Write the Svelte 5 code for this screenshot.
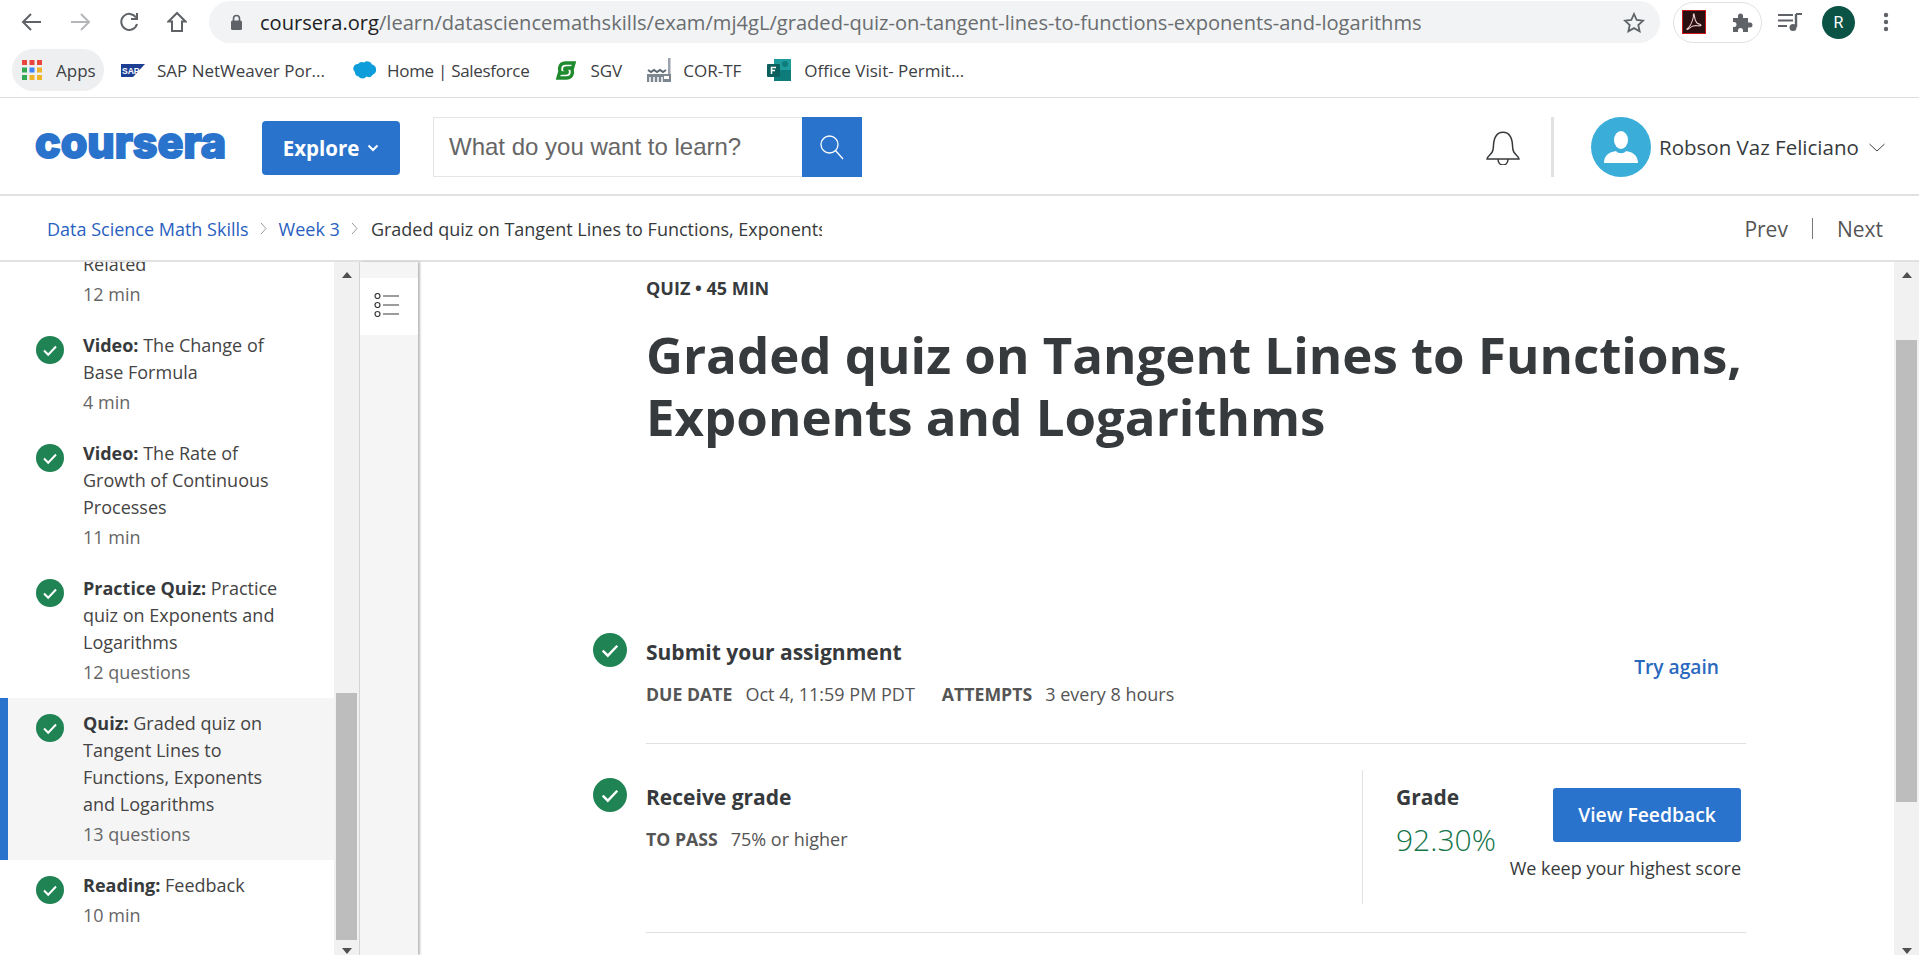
<script>
	const lessons = [
		{ label: 'Video:', title: 'The Change of Base Formula', meta: '4 min' },
		{ label: 'Video:', title: 'The Rate of Growth of Continuous Processes', meta: '11 min' },
		{ label: 'Practice Quiz:', title: 'Practice quiz on Exponents and Logarithms', meta: '12 questions' },
		{ label: 'Quiz:', title: 'Graded quiz on Tangent Lines to Functions, Exponents and Logarithms', meta: '13 questions', active: true },
		{ label: 'Reading:', title: 'Feedback', meta: '10 min' }
	];
</script>

{#snippet check(size)}
	<svg class="check" width={size} height={size} viewBox="0 0 28 28">
		<circle cx="14" cy="14" r="14" fill="#1f8354" />
		<path d="M8 14.5l4.2 4.2L20 10.5" fill="none" stroke="#fff" stroke-width="2" />
	</svg>
{/snippet}

<div class="page">
	<div class="toolbar">
		<svg class="nav first" width="21" height="20" viewBox="0 0 21 20"><path d="M20 10H3M10 2l-8 8 8 8" fill="none" stroke="#5f6368" stroke-width="2" /></svg>
		<svg class="nav" width="21" height="20" viewBox="0 0 21 20"><path d="M1 10h17M11 2l8 8-8 8" fill="none" stroke="#b4b6b9" stroke-width="2" /></svg>
		<svg class="nav" width="20" height="22" viewBox="0 0 20 22"><path d="M17 6.5A8 8 0 1 0 18 13M18 2v6h-6" fill="none" stroke="#5f6368" stroke-width="2" /></svg>
		<svg class="nav" width="20" height="22" viewBox="0 0 20 22"><path d="M10 2L1.5 10.5H5V20h10v-9.500h3.500z" fill="none" stroke="#5f6368" stroke-width="2" /></svg>
		<div class="omnibox">
			<svg width="13" height="17" viewBox="0 0 13 17"><path d="M3.500 7V4.500a3 3 0 0 1 6 0V7" fill="none" stroke="#5f6368" stroke-width="1.600" /><rect x="1" y="6.500" width="11" height="9.500" rx="1.500" fill="#5f6368" /></svg>
			<span class="url"><span class="host">coursera.org</span>/learn/datasciencemathskills/exam/mj4gL/graded-quiz-on-tangent-lines-to-functions-exponents-and-logarithms</span>
			<svg class="star" width="22" height="21" viewBox="0 0 22 21"><path d="M11 2l2.700 6 6.300.7-4.700 4.300 1.300 6.300L11 16.100 5.400 19.300 6.700 13 2 8.700 8.300 8z" fill="none" stroke="#5f6368" stroke-width="1.800" /></svg>
		</div>
		<div class="ext-pill">
			<svg width="24" height="24" viewBox="0 0 24 24"><rect x=".5" y=".5" width="23" height="23" fill="#2a0f10" stroke="#c8171d" /><path d="M5 19c3-2 5-6 6.500-12.500C11 4.500 11.500 3.500 12 4c.7.800 0 6 3 9 2 1.500 4 1 4 2.500-1 1-5-.500-8 .5-3 1-5 4-6 3.500z" fill="none" stroke="#e8c9c9" stroke-width="1.100" /></svg>
			<svg width="21" height="21" viewBox="0 0 21 21"><path d="M1 6h5V4a2.500 2.500 0 0 1 5 0v2h5v4.500h2a2.500 2.500 0 0 1 0 5h-2V20h-5v-1.500a2.500 2.500 0 0 0-5 0V20H1v-5h1a2.500 2.500 0 0 0 0-5H1z" fill="#5f6368" /></svg>
		</div>
		<svg class="media" width="24" height="20" viewBox="0 0 24 20"><path d="M0 3h15M0 8.500h15M0 14h9" stroke="#5f6368" stroke-width="2" /><path d="M18 2v13" stroke="#5f6368" stroke-width="2.400" /><path d="M18 2h6" stroke="#5f6368" stroke-width="2" /><circle cx="15" cy="15.500" r="3.500" fill="#5f6368" /></svg>
		<div class="profile">R</div>
		<svg class="dots" width="6" height="20" viewBox="0 0 6 20"><circle cx="3" cy="3" r="2.200" fill="#5f6368" /><circle cx="3" cy="10" r="2.200" fill="#5f6368" /><circle cx="3" cy="17" r="2.200" fill="#5f6368" /></svg>
	</div>

	<div class="bookmarks">
		<div class="bm apps">
			<svg width="20" height="20" viewBox="0 0 20 20">
				<g fill="#e8453c"><rect width="5" height="5" /><rect x="7.500" width="5" height="5" /><rect x="15" width="5" height="5" /></g>
				<rect y="7.500" width="5" height="5" fill="#34a853" />
				<rect x="7.500" y="7.500" width="5" height="5" fill="#4285f4" />
				<rect x="15" y="7.500" width="5" height="5" fill="#f0b429" />
				<rect y="15" width="5" height="5" fill="#34a853" />
				<rect x="7.500" y="15" width="5" height="5" fill="#f0b429" />
				<rect x="15" y="15" width="5" height="5" fill="#f0b429" />
			</svg>
			<span>Apps</span>
		</div>
		<div class="bm sap">
			<svg width="24" height="13" viewBox="0 0 24 13"><path d="M0 0h24L12 13H0z" fill="#1c3f94" /><text x="1" y="10" class="sap-mark">SAP</text></svg>
			<span>SAP NetWeaver Por...</span>
		</div>
		<div class="bm sf">
			<svg width="24" height="18" viewBox="0 0 24 18"><path d="M6 3a5 5 0 0 1 6-1.500A5 5 0 0 1 20 3.500a5.500 5.500 0 0 1 .5 10.500 4.500 4.500 0 0 1-6 1.500 5 5 0 0 1-8 0A4 4 0 0 1 3 11 4.500 4.500 0 0 1 6 3z" fill="#0d9ddb" /></svg>
			<span>Home | Salesforce</span>
		</div>
		<div class="bm sgv">
			<svg width="20" height="21" viewBox="0 0 20 21"><g fill="none" stroke="#1f8a2e" stroke-width="3.400"><path d="M6.500 13.500C2 12 2.500 3 9.500 3H18l-1.500 5H10.500C8 8 8.500 10.500 10 11" /><path d="M13.500 7.500C18 9 17.500 18 10.500 18H2l1.500-5h6c2.500 0 2-2.500.500-3" /></g></svg>
			<span>SGV</span>
		</div>
		<div class="bm cor">
			<svg width="24" height="24" viewBox="0 0 24 24"><path d="M21 0h2.500v17H21z" fill="#9aa3ab" /><path d="M1 12l3 2 3-2 3 2 3-2 3 2 3-2" fill="none" stroke="#5d6770" stroke-width="2" /><rect y="16" width="24" height="8" fill="#7d8790" /><path d="M3 19v5M7 19v5M11 19v5M15 19v5" stroke="#fff" stroke-width="1.500" /><rect x="17" y="18" width="5" height="3" fill="#fff" /></svg>
			<span>COR-TF</span>
		</div>
		<div class="bm office">
			<svg width="24" height="22" viewBox="0 0 24 22"><rect x="7" width="17" height="11" fill="#1e9c9b" /><circle cx="18" cy="5" r="3" fill="#0d7c7b" /><rect x="7" y="11" width="17" height="11" fill="#0d7c7b" /><rect y="5" width="13" height="13" rx="1" fill="#0b5f5e" /><path d="M4.500 15V8.500h4.500M4.500 11.500H8" fill="none" stroke="#fff" stroke-width="1.500" /></svg>
			<span>Office Visit- Permit...</span>
		</div>
	</div>

	<header class="site-header">
		<svg class="logo" width="191" height="34" viewBox="0 0 191 34"><text x="0" y="30" textLength="191" lengthAdjust="spacingAndGlyphs" class="logo-text">coursera</text></svg>
		<button class="explore">Explore
			<svg width="12" height="8" viewBox="0 0 12 8"><path d="M1.500 1.500L6 6l4.500-4.500" fill="none" stroke="#fff" stroke-width="2" /></svg>
		</button>
		<div class="search">
			<div class="search-input">What do you want to learn?</div>
			<div class="search-btn">
				<svg width="26" height="26" viewBox="0 0 26 26"><circle cx="10.500" cy="10.500" r="8.500" fill="none" stroke="#fff" stroke-width="1.300" /><path d="M16.500 16.500L24 25" stroke="#fff" stroke-width="1.300" /></svg>
			</div>
		</div>
		<svg class="bell" width="34" height="35" viewBox="0 0 34 35"><path d="M1 29c0-3 5-4 6-9 1-6 0-10 3-14 3-5 11-5 14 0 3 4 2 8 3 14 1 5 6 6 6 9zM12 29c0 8 10 8 10 0" fill="none" stroke="#373a3c" stroke-width="1.500" /></svg>
		<div class="sep"></div>
		<div class="avatar">
			<svg width="36" height="36" viewBox="0 0 36 36"><ellipse cx="18" cy="11" rx="7" ry="9" fill="#fff" /><path d="M1 34c0-9 7-11 12-12 2 3 8 3 10 0 5 1 12 3 12 12z" fill="#fff" /></svg>
		</div>
		<span class="user">Robson Vaz Feliciano</span>
		<svg width="16" height="9" viewBox="0 0 16 9"><path d="M.5 1L8 8l7.500-7" fill="none" stroke="#444" stroke-width="1" /></svg>
	</header>

	<nav class="crumbs">
		<a href="#a">Data Science Math Skills</a>
		<svg width="7" height="13" viewBox="0 0 7 13"><path d="M1 1l5 5.500L1 12" fill="none" stroke="#999" stroke-width="1" /></svg>
		<a href="#b">Week 3</a>
		<svg width="7" height="13" viewBox="0 0 7 13"><path d="M1 1l5 5.500L1 12" fill="none" stroke="#999" stroke-width="1" /></svg>
		<span class="current">Graded quiz on Tangent Lines to Functions, Exponents and Logarithms</span>
		<div class="pager">
			<span>Prev</span>
			<i></i>
			<span>Next</span>
		</div>
	</nav>

	<div class="workspace">
		<aside class="lessons">
			<div class="item clipped">
				<div class="text">
					<div>Related</div>
					<div class="meta">12 min</div>
				</div>
			</div>
			{#each lessons as l}
				<div class="item" class:active={l.active}>
					{@render check(28)}
					<div class="text">
						<div><b>{l.label}</b> {l.title}</div>
						<div class="meta">{l.meta}</div>
					</div>
				</div>
			{/each}
		</aside>
		<div class="scrollbar side">
			<span class="up"></span>
			<span class="thumb"></span>
			<span class="down"></span>
		</div>
		<div class="rail">
			<div class="rail-btn">
				<svg width="26" height="24" viewBox="0 0 26 24"><g fill="none" stroke="#373a3c" stroke-width="1.200"><circle cx="3.500" cy="3" r="2.500" /><circle cx="3.500" cy="12" r="2.500" /><circle cx="3.500" cy="21" r="2.500" /><path d="M9 3h16M9 12h16M9 21h16" /></g></svg>
			</div>
		</div>
		<main class="content">
			<div class="kicker">QUIZ • 45 MIN</div>
			<h1>Graded quiz on Tangent Lines to Functions, Exponents and Logarithms</h1>

			<section class="step">
				{@render check(34)}
				<div class="step-body">
					<div class="step-left">
						<h2>Submit your assignment</h2>
						<p><b>DUE DATE</b><span>Oct 4, 11:59 PM PDT</span><b class="second">ATTEMPTS</b><span>3 every 8 hours</span></p>
					</div>
					<a class="retry" href="#c">Try again</a>
				</div>
			</section>

			<section class="step">
				{@render check(34)}
				<div class="step-body">
					<div class="step-left">
						<h2>Receive grade</h2>
						<p><b>TO PASS</b><span>75% or higher</span></p>
					</div>
					<div class="grade">
						<div class="score">
							<h2>Grade</h2>
							<div class="pct">92.30%</div>
						</div>
						<div class="feedback">
							<button>View Feedback</button>
							<div class="keep">We keep your highest score</div>
						</div>
					</div>
				</div>
			</section>
		</main>
		<div class="scrollbar wide">
			<span class="up"></span>
			<span class="thumb"></span>
			<span class="down"></span>
		</div>
	</div>
</div>

<style>
	:global(body) {
		margin: 0;
		background: #fff;
	}
	.page {
		width: 1919px;
		height: 955px;
		display: flex;
		flex-direction: column;
		overflow: hidden;
		font-family: "Open Sans", sans-serif;
		color: #373a3c;
	}

	/* browser chrome */
	.toolbar {
		height: 44px;
		flex: none;
		display: flex;
		align-items: center;
	}
	.nav {
		flex: none;
		margin-left: 28px;
	}
	.nav.first {
		margin-left: 21px;
	}
	.omnibox {
		margin-left: 22px;
		width: 1451px;
		height: 42px;
		box-sizing: border-box;
		background: #f1f3f4;
		border-radius: 21px;
		display: flex;
		align-items: center;
		padding-left: 21px;
	}
	.url {
		margin-left: 17px;
		font-size: 20.100px;
		color: #6a6d70;
		white-space: nowrap;
		flex: 1;
	}
	.host {
		color: #202124;
	}
	.star {
		margin-right: 15px;
	}
	.ext-pill {
		margin-left: 13px;
		width: 89px;
		height: 41px;
		box-sizing: border-box;
		border: 1.500px solid #dfe1e5;
		border-radius: 21px;
		display: flex;
		align-items: center;
		gap: 26px;
		padding-left: 8px;
	}
	.media {
		margin-left: 16px;
	}
	.profile {
		margin-left: 20px;
		width: 33px;
		height: 33px;
		border-radius: 50%;
		background: #0b5345;
		color: #fff;
		font: 16px/33px Roboto, sans-serif;
		text-align: center;
	}
	.dots {
		margin-left: 28px;
	}
	.bookmarks {
		height: 54px;
		flex: none;
		box-sizing: border-box;
		border-bottom: 1px solid #dcdcdc;
		padding-bottom: 1px;
		display: flex;
		align-items: center;
		font-size: 17px;
		color: #3c4043;
		white-space: nowrap;
	}
	.bm {
		display: flex;
		align-items: center;
		gap: 12px;
	}
	.sap-mark {
		font: 700 8.500px "Liberation Sans", sans-serif;
		fill: #fff;
	}
	.apps {
		margin-left: 12px;
		width: 92px;
		height: 42px;
		box-sizing: border-box;
		padding-left: 10px;
		gap: 14px;
		background: #eeeff0;
		border-radius: 21px;
	}
	.sap {
		margin-left: 17px;
	}
	.sf {
		margin-left: 27px;
		gap: 11px;
		letter-spacing: -0.300px;
	}
	.sgv {
		margin-left: 27px;
		gap: 14px;
	}
	.cor {
		margin-left: 25px;
	}
	.office {
		margin-left: 26px;
		gap: 13px;
	}

	/* site header */
	.site-header {
		height: 98px;
		flex: none;
		box-sizing: border-box;
		border-bottom: 2px solid #e1e1e1;
		padding-top: 2px;
		display: flex;
		align-items: center;
		padding-left: 35px;
	}
	.logo {
		margin-top: -4px;
	}
	.logo-text {
		font-family: Inter, sans-serif;
		font-weight: 800;
		font-size: 44px;
		fill: #2a73cc;
		stroke: #2a73cc;
		stroke-width: 2;
	}
	.explore {
		margin-left: 36px;
		margin-top: 2px;
		width: 138px;
		height: 54px;
		border: 0;
		border-radius: 4px;
		background: #2a73cc;
		color: #fff;
		font: 700 20.500px "Open Sans", sans-serif;
		display: flex;
		align-items: center;
		justify-content: center;
		gap: 8px;
	}
	.search {
		margin-left: 33px;
		display: flex;
		height: 60px;
		width: 429px;
	}
	.search-input {
		flex: 1;
		box-sizing: border-box;
		border: 1px solid #e5e5e5;
		border-right: 0;
		padding-left: 15px;
		font: 24px/58px "Liberation Sans", sans-serif;
		color: #666;
	}
	.search-btn {
		width: 60px;
		background: #2a73cc;
		display: flex;
		align-items: center;
		justify-content: center;
	}
	.bell {
		margin-left: 624px;
	}
	.sep {
		margin-left: 31px;
		width: 3px;
		height: 60px;
		background: #e1e1e1;
	}
	.avatar {
		margin-left: 37px;
		width: 60px;
		height: 60px;
		border-radius: 50%;
		background: #3aaed8;
		display: flex;
		align-items: center;
		justify-content: center;
	}
	.user {
		margin-left: 8px;
		margin-right: 10px;
		font-size: 20.500px;
		white-space: nowrap;
	}

	/* breadcrumbs */
	.crumbs {
		height: 66px;
		flex: none;
		box-sizing: border-box;
		border-bottom: 2px solid #e1e1e1;
		padding-top: 1px;
		display: flex;
		align-items: center;
		padding-left: 47px;
		font-size: 18px;
		white-space: nowrap;
		gap: 11px;
	}
	.crumbs a {
		color: #2a5fc0;
		text-decoration: none;
	}
	.crumbs a + svg {
		margin-right: 1px;
	}
	.current {
		width: 451px;
		overflow: hidden;
		margin-left: 1px;
	}
	.pager {
		margin-left: auto;
		margin-right: 36px;
		display: flex;
		align-items: center;
		gap: 24px;
		font-size: 21px;
		color: #555;
	}
	.pager i {
		width: 1px;
		height: 21px;
		background: #777;
	}

	/* left column */
	.workspace {
		flex: 1;
		min-height: 0;
		display: flex;
	}
	.lessons {
		width: 334px;
		flex: none;
		overflow: hidden;
	}
	.item {
		display: flex;
		padding: 12px 0 12px 36px;
		font-size: 18px;
		line-height: 27px;
		color: #444;
		border-left: 8px solid transparent;
		margin-left: -8px;
	}
	.item.clipped {
		margin-top: -11px;
		padding-top: 0;
		padding-left: 83px;
	}
	.item.active {
		margin-left: 0;
		padding-left: 28px;
		border-left-color: #2a73cc;
		background: #f5f5f5;
	}
	.item .text {
		width: 200px;
	}
	.item :global(.check) {
		flex: none;
		margin: 4px 19px 0 0;
	}
	.item b {
		font-weight: 700;
		color: #373a3c;
	}
	.meta {
		margin-top: 3px;
		color: #666;
	}

	/* scrollbars */
	.scrollbar {
		flex: none;
		position: relative;
		background: #f1f1f1;
	}
	.scrollbar.side {
		width: 25px;
		border-right: 1px solid #d4d4d4;
	}
	.scrollbar.wide {
		width: 25px;
	}
	.thumb {
		position: absolute;
		left: 2px;
		right: 2px;
		background: #bdbdbd;
	}
	.side .thumb {
		top: 431px;
		height: 247px;
	}
	.wide .thumb {
		top: 78px;
		height: 462px;
	}
	.up,
	.down {
		position: absolute;
		left: 50%;
		margin-left: -5px;
		border-left: 5px solid transparent;
		border-right: 5px solid transparent;
	}
	.up {
		top: 10px;
		border-bottom: 6px solid #505050;
	}
	.down {
		bottom: 1px;
		border-top: 6px solid #505050;
	}

	.rail {
		width: 58px;
		flex: none;
		padding-top: 16px;
		background: #f5f5f5;
		box-shadow: 2px 0 2px #bbb;
	}
	.rail-btn {
		height: 57px;
		box-sizing: border-box;
		padding: 0 5px 4px 0;
		background: #fff;
		display: flex;
		align-items: center;
		justify-content: center;
	}

	/* main content */
	.content {
		flex: 1;
		min-width: 0;
		margin-left: 4px;
		padding: 14px 148px 0 171px;
		overflow: hidden;
	}
	.kicker {
		margin-left: 53px;
		font-size: 18px;
		line-height: 24px;
		font-weight: 700;
	}
	h1 {
		margin: 23px 0 0 53px;
		font-size: 51px;
		line-height: 62px;
		font-weight: 700;
		height: 276px;
	}
	.step {
		display: flex;
		gap: 19px;
	}
	.step :global(.check) {
		flex: none;
		margin-top: 34px;
	}
	.step-body {
		flex: 1;
		min-width: 0;
		display: flex;
		justify-content: space-between;
		border-bottom: 1px solid #e1e1e1;
	}
	.step-left {
		padding-top: 38px;
	}
	h2 {
		margin: 0;
		font-size: 21px;
		line-height: 30px;
		font-weight: 700;
	}
	.step p {
		margin: 14px 0 36px;
		font-size: 18px;
		line-height: 26px;
		color: #555;
	}
	.step p b {
		margin-right: 13px;
		font-size: 17.700px;
		font-weight: 700;
	}
	.step p .second {
		margin-left: 27px;
	}
	.retry {
		margin: 53px 27px 0 0;
		color: #2a68c0;
		font-size: 19.200px;
		line-height: 30px;
		font-weight: 600;
		text-decoration: none;
		height: 30px;
	}
	.grade {
		margin: 26px 0 28px;
		width: 384px;
		height: 134px;
		box-sizing: border-box;
		border-left: 1px solid #e1e1e1;
		padding: 12px 5px 0 33px;
		display: flex;
		justify-content: space-between;
	}
	.pct {
		margin-top: 10px;
		font-size: 30px;
		line-height: 36px;
		font-weight: 300;
		color: #14744a;
	}
	.feedback {
		display: flex;
		flex-direction: column;
		align-items: flex-end;
		padding-top: 6px;
	}
	.feedback button {
		width: 188px;
		height: 54px;
		padding: 0 0 2px;
		border: 0;
		border-radius: 3px;
		background: #2a73cc;
		color: #fff;
		font: 600 19.300px "Open Sans", sans-serif;
	}
	.keep {
		margin-top: 13px;
		font-size: 18px;
		line-height: 26px;
		white-space: nowrap;
	}
</style>
